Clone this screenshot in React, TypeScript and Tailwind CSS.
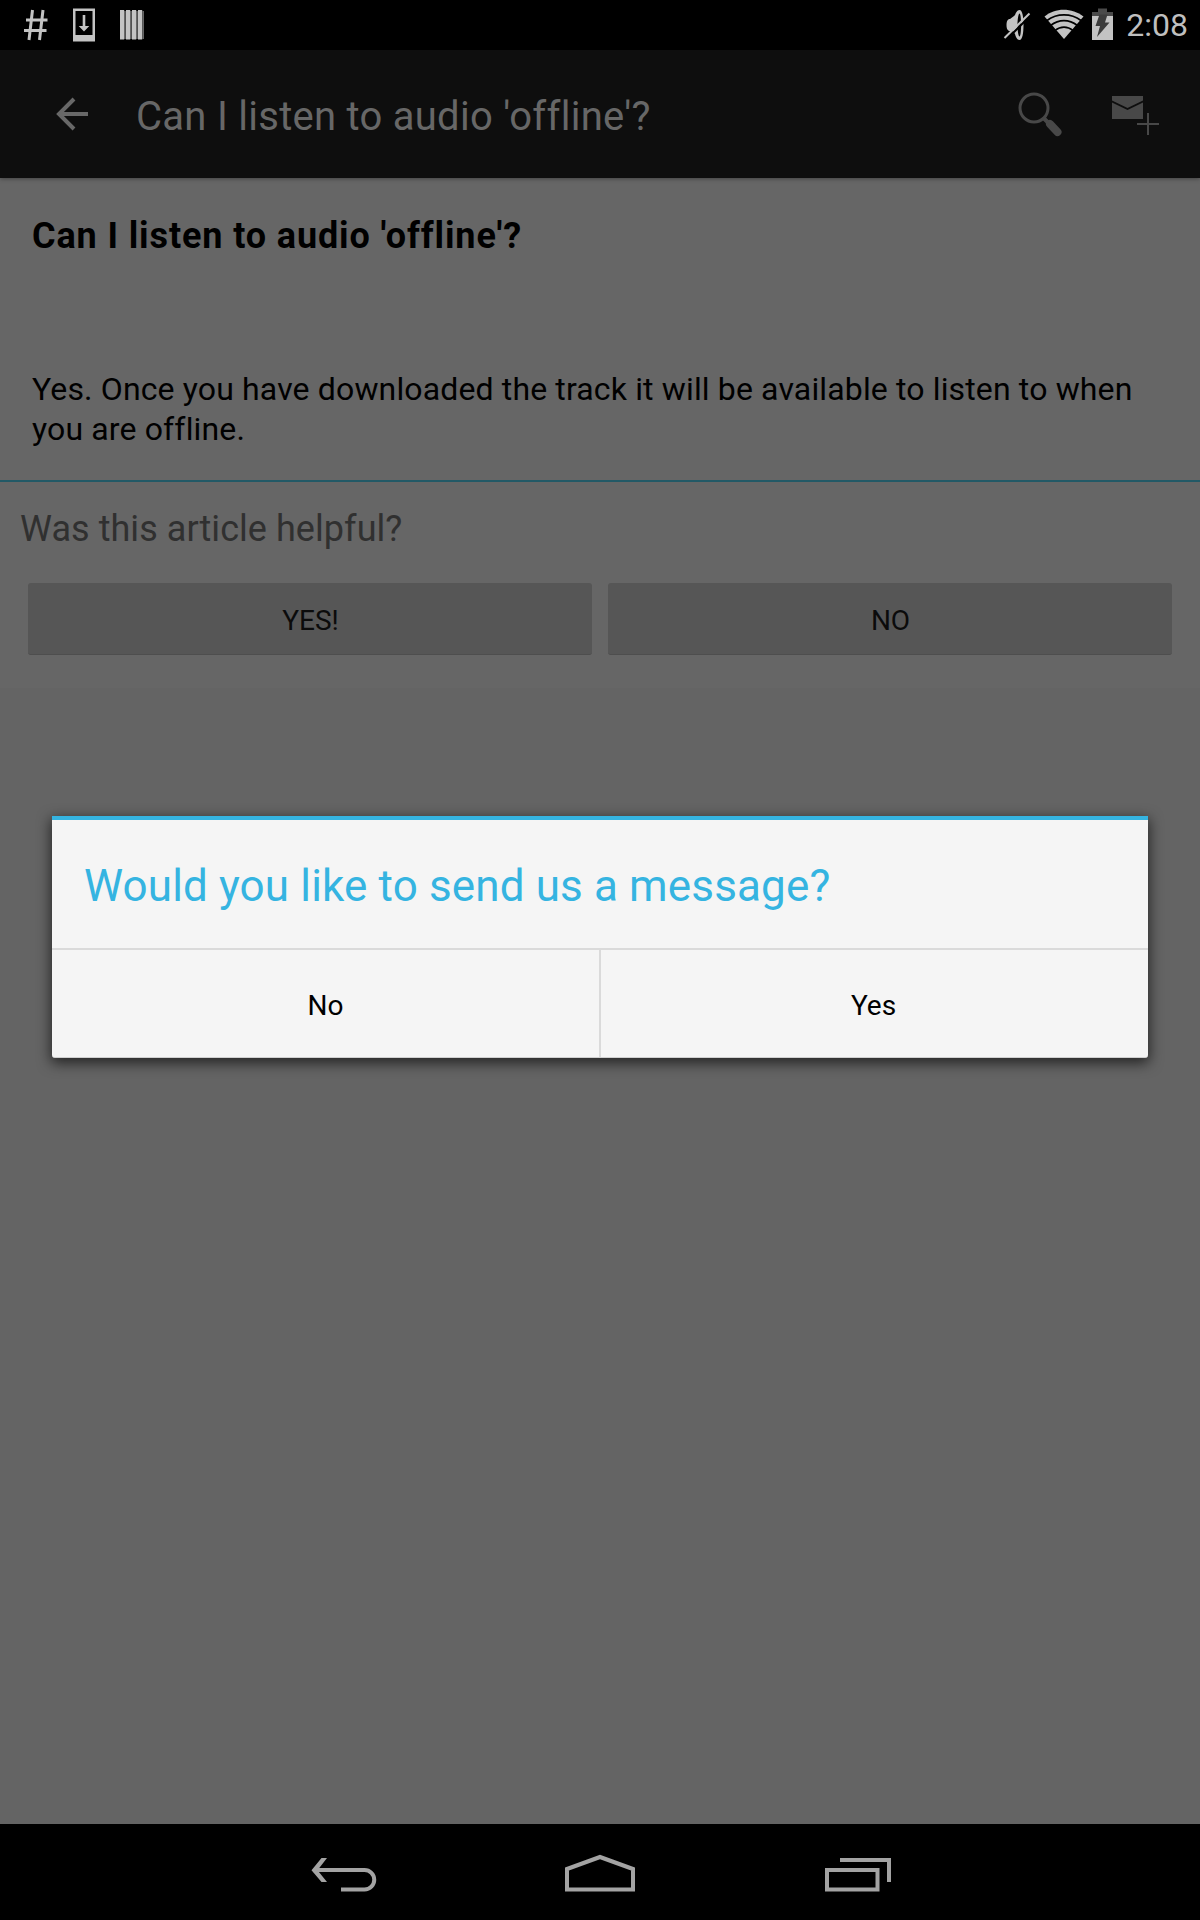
import React from 'react';

function StatusBar() {
  return (
    <div className="flex h-[50px] items-start justify-between bg-black">
      <svg width="160" height="50" viewBox="0 0 160 50" fill="none">
        <path d="M32.5 10L29 40M43 10L39.5 40M26 20H47.5M24 30.5H46.5" stroke="#c3c3c3" strokeWidth="3" />
        <path fillRule="evenodd" d="M73 8.500H95V41.500H73ZM75.500 11V35H92.500V11Z" fill="#c3c3c3" />
        <path d="M82.700 15h2.600v11h4L84 31.500L78.700 26h4z" fill="#c3c3c3" />
        <path d="M125 11V39M131 11V39M137 11V39M143.200 11V39" stroke="#666" strokeWidth="1.600" />
        <path d="M120 10h4.200v29.500H120zM126 10h4.200v29.500H126zM132 10h4.200v29.500H132zM138 10h4.200v29.500H138z" fill="#c3c3c3" />
      </svg>
      <div className="flex pr-[12px]">
        <svg width="147" height="50" viewBox="980 0 147 50">
          <path fillRule="evenodd" d="M1020.500 10c3 0 4 7 4 15s-1 15-4 15c-2 0-3.500-2-4.500-6l-2-3h-4c-2-1-2.500-3-2.500-6s.5-5 2.500-6h1l4-3l1-1c1-3 2.500-5 4.500-5zM1020.500 13.500c-1 0-2 5.500-2 11.500s1 11.500 2 11.500s1.600-5.500 1.600-11.500s-.6-11.500-1.600-11.500z" fill="#c3c3c3" />
          <path d="M1007 40L1032 15" stroke="#000" strokeWidth="2" />
          <path d="M1005.500 38L1030.500 13.500" stroke="#c3c3c3" strokeWidth="2" />
          <path d="M1065 39L1045.500 16.500C1056 7.500 1073 7.500 1084.500 16.500Z" fill="#c3c3c3" />
          <path d="M1048 20.500C1058 13 1072 13 1082 20.500M1051.500 25.500C1060 19 1070 19 1078.500 25.500M1056 30.500C1061.500 26 1068.500 26 1074 30.500" fill="none" stroke="#000" strokeWidth="1.600" />
          <path d="M1093 12h6V8.500h9V12h6v4h-21z" fill="#4a4a4a" />
          <path d="M1093 16h21v24h-21z" fill="#c3c3c3" />
          <path d="M1100.500 14.500h8l-2.500 8h4.500L1098 37l3-11h-4.500z" fill="#3c3c3c" />
        </svg>
        <span className="mt-[5px] text-[32px] leading-[40px] text-[#bfbfbf]">2:08</span>
      </div>
    </div>
  );
}

function AppBar() {
  return (
    <header className="relative flex h-[128px] items-center bg-[#0e0e0e] shadow-[0_1px_4px_rgba(0,0,0,0.35)]">
      <svg width="136" height="128" viewBox="0 50 136 128" fill="none" stroke="#686868" strokeWidth="4">
        <path d="M88 114H59M74 99L59 114L74 129" />
      </svg>
      <h1 className="flex-1 pt-[6px] text-[40px] leading-[48px] tracking-[0.27px] text-[#676767]">
        Can I listen to audio 'offline'?
      </h1>
      <svg width="190" height="128" viewBox="1010 50 190 128" fill="none">
        <circle cx="1034" cy="108" r="14" stroke="#484848" strokeWidth="3" />
        <path d="M1043.500 118L1048.500 123" stroke="#484848" strokeWidth="4" />
        <path d="M1050 124L1057.500 132" stroke="#484848" strokeWidth="8" strokeLinecap="round" />
        <path d="M1112 96h31v4.500l-15.500 7.500L1112 100.500zM1112 102.500l15.500 7.500L1143 102.500V119h-31z" fill="#484848" />
        <path d="M1137 124H1159M1148 113V135" stroke="#484848" strokeWidth="2" />
      </svg>
    </header>
  );
}

function Dialog() {
  return (
    <div className="absolute left-[52px] top-[816px] w-[1096px] rounded-b-[3px] border-b border-[#d0d0d0] bg-[#f5f5f5] shadow-[0_4px_14px_1px_rgba(0,0,0,0.65)]">
      <h2 className="h-[134px] border-b-2 border-t-4 border-b-[#dadada] border-t-[#35b4e1] pl-[32px] pt-[38px] text-[44px] leading-[56px] tracking-[0.14px] text-[#35b4e1]">
        Would you like to send us a message?
      </h2>
      <div className="flex h-[107px] text-[28px] leading-[32px] text-black">
        <button className="w-[549px] border-r-2 border-[#dadada] pt-[5px]">No</button>
        <button className="w-[547px] pr-[2px] pt-[5px]">Yes</button>
      </div>
    </div>
  );
}

function NavBar() {
  return (
    <nav className="flex h-24 justify-center bg-black">
      <svg width="640" height="96" viewBox="280 1824 640 96" fill="none" stroke="#a3a3a3" strokeWidth="4">
        <path d="M341 1889.500H364.500A9.700 9.700 0 0 0 364.500 1870H315" />
        <path d="M327 1858h-5.500L311.500 1870.300L321.500 1882H327L317.500 1870.300Z" fill="#a3a3a3" stroke="none" />
        <path d="M567 1889.500V1869L600 1857L633 1869V1889.500Z" />
        <path d="M827 1870H877.500V1889.500H827ZM840 1860H889V1882" />
      </svg>
    </nav>
  );
}

export default function App() {
  return (
    <div className="relative flex h-[1920px] w-[1200px] flex-col overflow-hidden bg-[#646464] font-['Roboto',sans-serif]">
      <StatusBar />
      <AppBar />
      <main className="flex-1">
        <article className="h-[304px] border-b-2 border-[#225966] bg-[#666] px-[32px] pt-[36px] text-black">
          <h2 className="text-[36px] font-bold leading-[44px] tracking-[0.88px]">Can I listen to audio 'offline'?</h2>
          <p className="mt-[111px] text-[32px] leading-[40px] tracking-[0.14px]">
            Yes. Once you have downloaded the track it will be available to listen to when
            <br />
            you are offline.
          </p>
        </article>
        <section className="h-[206px] bg-[#666]">
          <h3 className="pl-[20px] pt-[25px] text-[36px] leading-[44px] tracking-[0.05px] text-[#303030]">
            Was this article helpful?
          </h3>
          <div className="mt-[32px] flex gap-4 px-[28px] text-[28px] text-[#0b0b0b]">
            <button className="h-[72px] flex-1 rounded-[3px] border-b border-[#4e4e4e] bg-[#565656] pl-px pt-[4px]">YES!</button>
            <button className="h-[72px] flex-1 rounded-[3px] border-b border-[#4e4e4e] bg-[#565656] pl-px pt-[4px]">NO</button>
          </div>
        </section>
      </main>
      <NavBar />
      <Dialog />
    </div>
  );
}
